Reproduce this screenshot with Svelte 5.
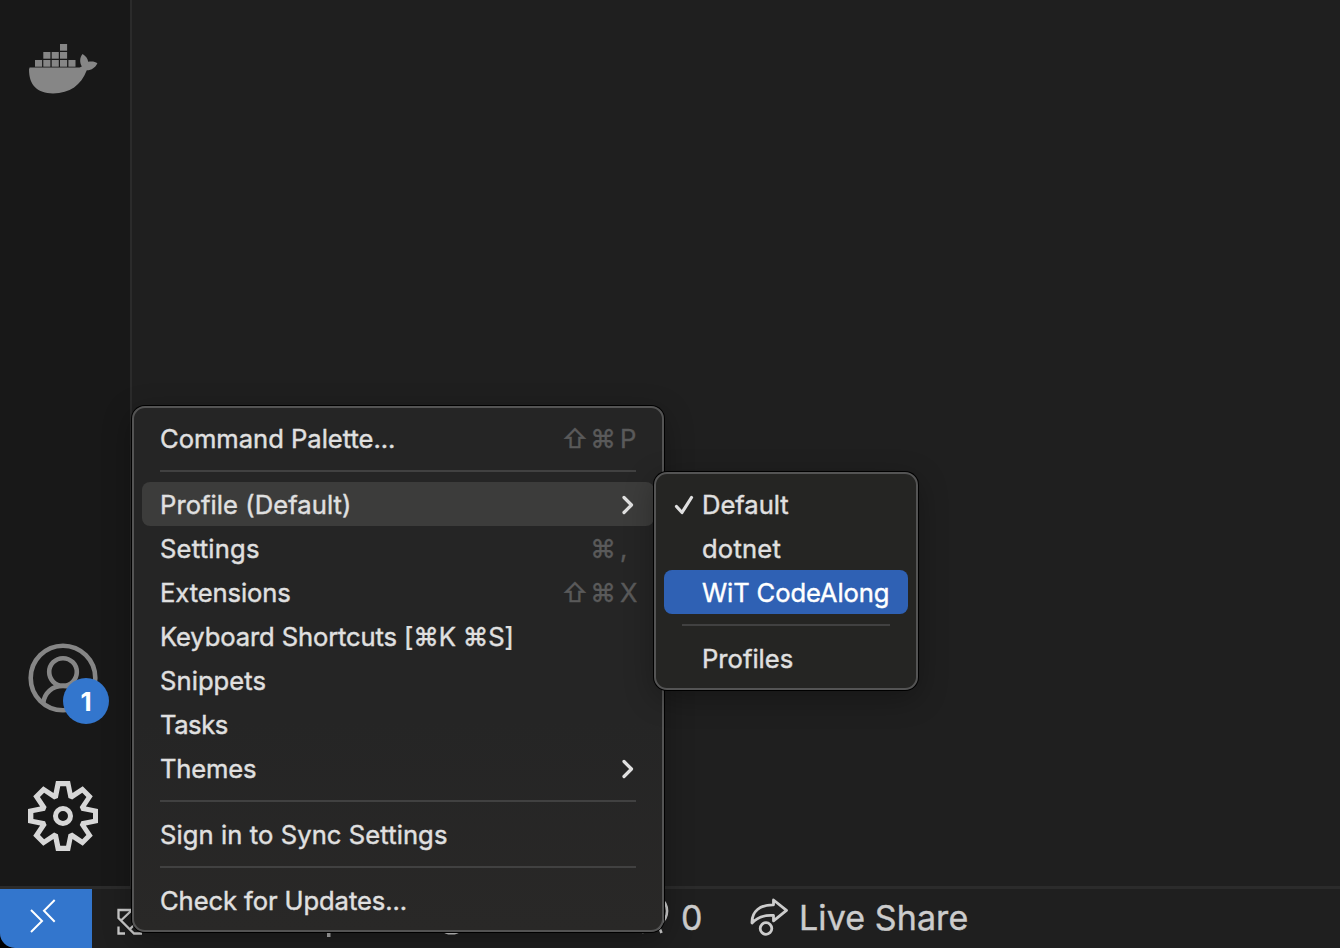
<script>
  const menu = [
    { label: 'Command Palette...', keys: ['⇧', '⌘', 'P'], tracking: -0.03 },
    { separator: true },
    { label: 'Profile (Default)', arrow: true, open: true, tracking: 0.05 },
    { label: 'Settings', keys: ['⌘', ','], tracking: 0.2 },
    { label: 'Extensions', keys: ['⇧', '⌘', 'X'], tracking: -0.1 },
    { label: 'Keyboard Shortcuts [⌘K ⌘S]', tracking: -0.13 },
    { label: 'Snippets', tracking: 0.05 },
    { label: 'Tasks', tracking: -0.45 },
    { label: 'Themes', arrow: true, tracking: -0.2 },
    { separator: true },
    { label: 'Sign in to Sync Settings', tracking: 0.08 },
    { separator: true },
    { label: 'Check for Updates...', tracking: -0.1 }
  ];
  const submenu = [
    { label: 'Default', checked: true, tracking: -0.05 },
    { label: 'dotnet', tracking: 0.2 },
    { label: 'WiT CodeAlong', selected: true, tracking: -0.13 },
    { separator: true },
    { label: 'Profiles', tracking: 0 }
  ];
  const crates = [[35, 60], [43.3, 60], [51.7, 60], [60, 60], [68.4, 60], [43.3, 52], [51.7, 52], [60, 52], [60, 44]];
</script>

<div class="window">
  <div class="main">
    <nav class="activity">
      <svg class="docker" width="70" height="52" viewBox="28 43 70 52" fill="#868686">
        {#each crates as [x, y]}
          <rect {x} {y} width="7.1" height="6.7" />
        {/each}
        <path d="M29.6 67.6H76C79 67.6 80.6 67.2 81.8 66.4C79.4 62.2 79.7 57.4 82.6 54C86 56.2 87.8 58.8 88.2 61.8C91.6 61 95.2 61.5 97.4 63.2C95.4 67.6 91.8 70 86.8 70.3C81 85.2 70 93.4 53 93.4C37.4 93.4 29 85.4 29 69.6Z" />
      </svg>
      <div class="bottom">
        <div class="account">
          <svg width="70" height="70" viewBox="28 643.5 70 70" fill="none" stroke="#868686" stroke-width="4.6">
            <circle cx="63" cy="678.5" r="32.3" />
            <circle cx="63" cy="672.5" r="13.8" />
            <path d="M43.2 703.5C44.5 693.5 52 686.4 63 686.4S81.5 693.5 82.8 703.5" />
          </svg>
          <span class="badge">1</span>
        </div>
        <svg width="70" height="70" viewBox="0 0 24 24" fill="#d7d7d7" fill-rule="evenodd">
          <path d="M19.85 8.75l4.15.83v4.84l-4.15.83 2.35 3.52-3.43 3.43-3.52-2.35-.83 4.15H9.58l-.83-4.15-3.52 2.35-3.43-3.43 2.35-3.52L0 14.42V9.58l4.15-.83L1.8 5.23 5.23 1.8l3.52 2.35L9.58 0h4.84l.83 4.15 3.52-2.35 3.43 3.43-2.35 3.52zm-1.57 5.07l4-.81v-2l-4-.81-.54-1.3 2.29-3.43-1.43-1.43-3.43 2.29-1.3-.54-.81-4h-2l-.81 4-1.3.54-3.43-2.29-1.43 1.43L6.38 8.9l-.54 1.3-4 .81v2l4 .81.54 1.3-2.29 3.43 1.43 1.43 3.43-2.29 1.3.54.81 4h2l.81-4 1.3-.54 3.43 2.29 1.43-1.43-2.29-3.43.54-1.3zM12 8.57a3.43 3.43 0 1 0 0 6.86 3.43 3.43 0 0 0 0-6.86zm0 1.72a1.71 1.71 0 1 1 0 3.42 1.71 1.71 0 0 1 0-3.42z" />
        </svg>
      </div>
    </nav>
    <main class="editor"></main>
  </div>

  <footer class="status">
    <div class="remote">
      <svg width="28" height="36" viewBox="29 898 28 36" fill="none" stroke="#fff" stroke-width="2">
        <path d="M31 910L42 921L31 932M54.7 900L44 910.7L54.7 921.7" />
      </svg>
    </div>
    <svg class="sync" width="30" height="30" viewBox="116 907 30 30" fill="none" stroke="#ccc" stroke-width="2.3">
      <path d="M134 910H118.5V918L134 933.5H142M118.5 926.5V933.5H125M131.5 910.5L121 920.5M129 930L134 925" />
    </svg>
    <svg class="branch" width="10" height="6" viewBox="0 0 10 6" fill="#aaa">
      <rect x="3" y="1" width="3.5" height="4" />
    </svg>
    <svg class="ring" width="30" height="34" viewBox="436 902 30 34" fill="none" stroke="#ccc" stroke-width="2.6">
      <circle cx="451.5" cy="918.5" r="14.8" />
    </svg>
    <svg class="tower" width="40" height="40" viewBox="633 896 40 40" fill="none" stroke="#ccc" stroke-width="2.6">
      <path d="M660 898A15.5 15.5 0 0 1 660 924M651.5 912L642 933M653 912L661.5 933" />
    </svg>
    <span class="ports">0</span>
    <svg class="share" width="40" height="40" viewBox="749 897 40 40" fill="none" stroke="#ccc" stroke-width="2.8" stroke-linejoin="round">
      <path d="M773.5 900L786.5 910.3L773.5 920.8V915.5C763 914.7 757 917.5 752 923C751.5 911.5 760 904.6 773.5 904.8Z" />
      <circle cx="766" cy="928.5" r="5.8" />
    </svg>
    <span class="live">Live Share</span>
  </footer>

  <div class="menu primary">
    {#each menu as item}
      {#if item.separator}
        <hr />
      {:else}
        <div class="item" class:open={item.open}>
          <span style:letter-spacing="{item.tracking}px">{item.label}</span>
          {#if item.keys}
            <span class="keys">
              {#each item.keys as key}<kbd>{key}</kbd>{/each}
            </span>
          {/if}
          {#if item.arrow}
            <svg class="chevron" width="14" height="22" viewBox="0 0 14 22" fill="none" stroke="#e0e0e0" stroke-width="3.2" stroke-linecap="round" stroke-linejoin="round">
              <path d="M3 3.5L10.5 11L3 18.5" />
            </svg>
          {/if}
        </div>
      {/if}
    {/each}
  </div>

  <div class="menu secondary">
    {#each submenu as item}
      {#if item.separator}
        <hr />
      {:else}
        <div class="item" class:selected={item.selected}>
          <span class="mark">
            {#if item.checked}
              <svg width="20" height="22" viewBox="0 0 20 22" fill="none" stroke="#e0e0e0" stroke-width="3.2" stroke-linecap="round" stroke-linejoin="round">
                <path d="M2.5 12.5L8 18.5L17.5 3.5" />
              </svg>
            {/if}
          </span>
          <span style:letter-spacing="{item.tracking}px">{item.label}</span>
        </div>
      {/if}
    {/each}
  </div>
</div>

<style>
  :global(body) { margin: 0; background: #000; }
  .window {
    position: relative;
    display: flex;
    flex-direction: column;
    width: 1340px;
    height: 948px;
    overflow: hidden;
    border-bottom-left-radius: 15px;
    background: #1f1f1f;
    font-family: Inter, "Liberation Sans", sans-serif;
    color: #e0e0e0;
  }
  svg { display: block; flex: none; }
  .main { display: flex; height: 886px; }
  .activity {
    box-sizing: border-box;
    display: flex;
    flex-direction: column;
    justify-content: space-between;
    width: 132px;
    padding: 43px 0 34.6px 28px;
    border-right: 2px solid #2b2b2b;
    background: #181818;
  }
  .bottom { display: flex; flex-direction: column; gap: 68px; }
  .account { position: relative; width: 70px; }
  .badge {
    position: absolute;
    left: 35px;
    top: 34.6px;
    width: 46px;
    height: 46px;
    border-radius: 50%;
    background: #3376cd;
    color: #fff;
    font-size: 26px;
    font-weight: 700;
    line-height: 47px;
    text-align: center;
  }
  .editor { flex: 1; }
  .status {
    display: flex;
    align-items: flex-start;
    height: 59px;
    border-top: 3px solid #2b2b2b;
    font-size: 34px;
    letter-spacing: 0.1px;
    line-height: 58px;
    color: #ccc;
    -webkit-text-stroke: 0.4px currentColor;
  }
  .remote { width: 63px; height: 50px; padding: 9px 0 0 29px; background: #3376cd; }
  .sync { margin: 18px 0 0 24px; }
  .branch { margin: 43px 0 0 178px; }
  .ring { margin: 13px 0 0 102px; }
  .tower { margin: 7px 0 0 167px; }
  .ports { width: 68px; padding-left: 8px; }
  .share { margin-top: 8px; }
  .live { padding-left: 10px; }
  .menu {
    position: absolute;
    box-sizing: border-box;
    padding: 8px;
    border: 2px solid #545454;
    border-radius: 13px;
    background: #252525;
    box-shadow: 0 0 0 1px #000, 0 8px 30px rgba(0, 0, 0, 0.3);
  }
  .primary { left: 132px; top: 406px; width: 532px; background: linear-gradient(#252525 60%, #292827); }
  .secondary { left: 654px; top: 472px; width: 264px; background: #252523; }
  .item {
    box-sizing: border-box;
    display: flex;
    align-items: center;
    height: 44px;
    padding: 2px 17px 0 18px;
    border-radius: 8px;
    font-size: 25.6px;
    line-height: 42px;
    white-space: pre;
    -webkit-text-stroke: 0.4px currentColor;
  }
  .primary .item { justify-content: space-between; }
  .primary .open { width: 512px; background: #3c3c3b; }
  .secondary .item { padding: 2px 0 0 10px; }
  .mark { width: 28px; }
  .selected { background: #2f61b4; color: #fff; }
  .keys { display: flex; color: #5a5a5a; }
  kbd { width: 28px; font: inherit; text-align: center; }
  kbd:last-child { box-sizing: border-box; width: 20px; padding-left: 3px; text-align: left; }
  .chevron { margin-right: 2px; }
  hr { height: 2px; margin: 10px 18px; border: 0; background: #414141; }
</style>
